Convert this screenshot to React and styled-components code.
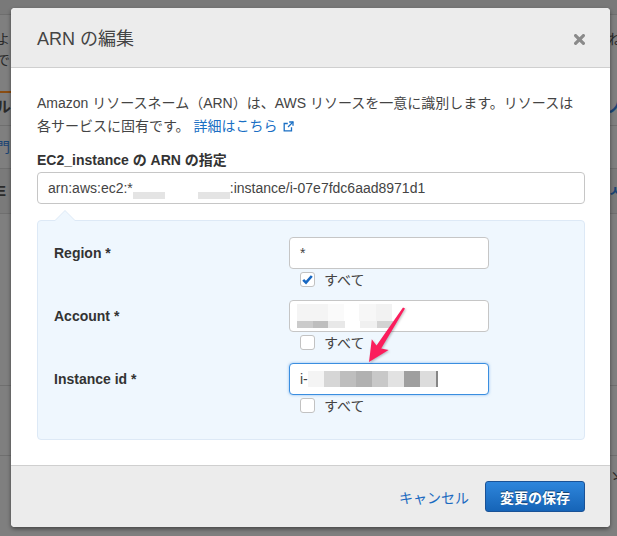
import React from "react";
import styled, { createGlobalStyle } from "styled-components";

const FONT = `"Liberation Sans", Arial, "Noto Sans CJK JP", sans-serif`;

const Global = createGlobalStyle`
  html, body { margin: 0; padding: 0; background: #7f7f7f; }
  body { font-family: ${FONT}; }
  * { box-sizing: border-box; }
`;

const Screen = styled.div`
  position: relative;
  width: 617px;
  height: 536px;
  overflow: hidden;
  background: #7f7f7f;
  font-family: ${FONT};
`;

/* ---------- dimmed background page ---------- */
const BgPage = styled.div`
  display: flex;
  flex-direction: column;
  width: 100%;
  height: 100%;
  color: #2a2a2a;
  font-size: 14px;
`;
const BgTop = styled.div`
  flex: none;
  height: 15px;
  background: #797979;
  border-bottom: 1px solid #6e6e6e;
`;
const BgRow = styled.div`
  flex: none;
  display: flex;
  justify-content: space-between;
  align-items: center;
  height: ${(p) => p.$h}px;
  margin: 0 -5px 0 -4px;
  line-height: 20px;
  font-weight: ${(p) => (p.$bold ? 700 : 400)};
  font-size: ${(p) => (p.$bold ? 15 : 14)}px;
  background: ${(p) => p.$bg || "transparent"};
  border-bottom: ${(p) => (p.$line ? "1px solid #6f6f6f" : "none")};
`;
const BgText = styled.span`
  color: ${(p) => p.$c || "#2a2a2a"};
`;
const BgAccent = styled.div`
  flex: none;
  height: 2px;
  width: 40px;
  background: #8a4d12;
`;

/* ---------- modal ---------- */
const Overlay = styled.div`
  position: absolute;
  inset: 0;
  display: flex;
  padding: 8px 7px 9px 11px;
`;
const Modal = styled.div`
  flex: 1;
  display: flex;
  flex-direction: column;
  background: #fff;
  border-radius: 4px;
  overflow: hidden;
  box-shadow: 0 2px 4px rgba(0, 0, 0, 0.45);
`;
const Header = styled.header`
  flex: none;
  height: 60px;
  display: flex;
  align-items: center;
  justify-content: space-between;
  padding: 3px 25px 0 26px;
  background: #ececec;
  border-bottom: 1px solid #cfcfcf;
`;
const Title = styled.h2`
  margin: 0;
  font-size: 18px;
  font-weight: 400;
  color: #444;
  line-height: 24px;
`;
const CloseBtn = styled.button`
  border: 0;
  padding: 0;
  background: none;
  width: 11px;
  height: 11px;
  display: flex;
  cursor: pointer;
`;
const Body = styled.div`
  flex: 1;
  padding: 24px 25px 0 26px;
  color: #444;
`;
const Desc = styled.p`
  margin: 0;
  font-size: 14px;
  line-height: 23px;
  color: #444;
`;
const Link = styled.a`
  color: #1a6fc4;
  text-decoration: none;
  display: inline-flex;
  align-items: center;
  gap: 5px;
`;
const FieldLabel = styled.div`
  margin-top: 12px;
  font-size: 14px;
  line-height: 21px;
  font-weight: 700;
  color: #333;
`;
const Field = styled.div`
  margin-top: ${(p) => p.$mt || 0}px;
  height: 32px;
  display: flex;
  align-items: center;
  padding: 0 ${(p) => p.$pl || 10}px;
  border: 1px solid ${(p) => (p.$focus ? "#3a8ee0" : "#c6c6c6")};
  border-radius: 4px;
  background: #fff;
  font-size: 14px;
  color: #444;
  white-space: nowrap;
  box-shadow: ${(p) => (p.$focus ? "0 0 3px rgba(58,142,224,0.55)" : "none")};
`;
const Redacted = styled.span`
  display: inline-flex;
  align-self: stretch;
  align-items: flex-end;
  padding-bottom: 4px;
`;
const Bar = styled.span`
  display: inline-block;
  width: ${(p) => p.$w}px;
  height: ${(p) => p.$h}px;
  background: ${(p) => p.$c};
`;
const Mosaic = styled.span`
  display: inline-flex;
  flex-direction: column;
`;
const MosaicRow = styled.span`
  display: flex;
`;

const Panel = styled.div`
  position: relative;
  margin-top: 16px;
  height: 220px;
  padding: 16px 16px 24px;
  background: #eff7fe;
  border: 1px solid #dde9f6;
  border-radius: 4px;
  display: flex;
  flex-direction: column;
  gap: 11px;

  &::before,
  &::after {
    content: "";
    position: absolute;
    left: 16px;
    border-style: solid;
    border-color: transparent;
  }
  &::before {
    top: -11px;
    border-width: 0 11px 11px;
    border-bottom-color: #dde9f6;
  }
  &::after {
    top: -10px;
    left: 17px;
    border-width: 0 10px 10px;
    border-bottom-color: #eff7fe;
  }
`;
const Row = styled.div`
  display: grid;
  grid-template-columns: 235px 200px;
  align-items: start;
`;
const RowLabel = styled.div`
  font-size: 14px;
  line-height: 32px;
  font-weight: 700;
  color: #333;
`;
const Stack = styled.div`
  display: flex;
  flex-direction: column;
`;
const CheckLine = styled.label`
  height: 20px;
  display: flex;
  align-items: center;
  gap: 9px;
  padding-left: 11px;
  font-size: 14px;
  color: #444;
`;
const Box = styled.span`
  width: 15px;
  height: 15px;
  border: 1px solid #c2c2c2;
  border-radius: 3px;
  background: #fff;
  display: flex;
  align-items: center;
  justify-content: center;
`;

const Footer = styled.footer`
  flex: none;
  height: 62px;
  display: flex;
  align-items: center;
  justify-content: flex-end;
  gap: 16px;
  padding: 0 25px;
  background: #ececec;
  border-top: 1px solid #cfcfcf;
`;
const CancelBtn = styled.button`
  border: 0;
  background: none;
  padding: 0;
  font-family: ${FONT};
  font-size: 14px;
  color: #1b6ac0;
  cursor: pointer;
`;
const SaveBtn = styled.button`
  width: 100px;
  height: 31px;
  border: 1px solid #1a5296;
  border-radius: 3px;
  background: linear-gradient(#2e86dc, #1664b7);
  color: #fff;
  font-family: ${FONT};
  font-size: 14px;
  font-weight: 700;
  text-shadow: 0 -1px 0 rgba(0, 0, 0, 0.45);
  cursor: pointer;
`;

const Annotation = styled.svg`
  position: absolute;
  left: 360px;
  top: 300px;
  filter: drop-shadow(1px 1px 1px rgba(0, 0, 0, 0.25));
`;

const CloseIcon = () => (
  <svg width="11" height="11" viewBox="0 0 11 11">
    <path d="M1.6 1.6 L9.4 9.4 M9.4 1.6 L1.6 9.4" stroke="#8a8a8a" strokeWidth="3.2" strokeLinecap="round" />
  </svg>
);

const ExtIcon = () => (
  <svg width="11" height="11" viewBox="0 0 11 11" fill="none" stroke="#1a6fc4" strokeWidth="1.3">
    <path d="M8.5 6.2 V9.8 H1.2 V2.5 H4.8" />
    <path d="M6.2 1 H10 V4.8" />
    <path d="M10 1 L5 6" />
  </svg>
);

const Check = () => (
  <svg width="13" height="13" viewBox="0 0 13 13">
    <path d="M2.2 6.8 L5 9.6 L10.8 3" fill="none" stroke="#1868c2" strokeWidth="2.6" />
  </svg>
);

const CheckAll = ({ checked }) => (
  <CheckLine>
    <Box>{checked && <Check />}</Box>
    すべて
  </CheckLine>
);

const accountTop = [
  [31, "#f4f4f4"],
  [16, "#fafafa"],
  [15, "#ffffff"],
  [17, "#f7f7f7"],
  [16, "#f2f2f2"],
];
const accountBottom = [
  [16, "#cbcbcb"],
  [15, "#bebebe"],
  [17, "#e8e8e8"],
  [15, "#ffffff"],
  [17, "#f0f0f0"],
  [16, "#d3d3d3"],
];
const instanceBlocks = [
  [16, "#f4f4f4"],
  [16, "#d6d6d6"],
  [16, "#bebebe"],
  [16, "#b1b1b1"],
  [16, "#c8c8c8"],
  [16, "#e2e2e2"],
  [16, "#9f9f9f"],
  [16, "#dcdcdc"],
  [2, "#868686"],
];

export default function App() {
  return (
    <Screen>
      <Global />
      <BgPage>
        <BgTop />
        <BgRow $h={14} />
        <BgRow $h={20}>
          <BgText>よ</BgText>
          <BgText>ね</BgText>
        </BgRow>
        <BgRow $h={22}>
          <BgText>で</BgText>
        </BgRow>
        <BgRow $h={20} />
        <BgAccent />
        <BgRow $h={27} $bold>
          <BgText>ル</BgText>
          <BgText $c="#1c4575">ノ</BgText>
        </BgRow>
        <BgRow $h={6} $line />
        <BgRow $h={43} $line>
          <BgText $c="#1c4575">門</BgText>
        </BgRow>
        <BgRow $h={45} $line $bold $bg="#7a7a7a">
          <BgText>E</BgText>
          <BgText $c="#1c4575">ㅅ</BgText>
        </BgRow>
        <BgRow $h={172} $line />
        <BgRow $h={70} $line />
        <BgRow $h={40}>
          <span />
          <BgText>ゝ</BgText>
        </BgRow>
      </BgPage>

      <Overlay>
        <Modal>
          <Header>
            <Title>ARN の編集</Title>
            <CloseBtn aria-label="close">
              <CloseIcon />
            </CloseBtn>
          </Header>
          <Body>
            <Desc>
              Amazon リソースネーム（ARN）は、AWS リソースを一意に識別します。リソースは
              <br />
              各サービスに固有です。{" "}
              <Link href="#">
                詳細はこちら
                <ExtIcon />
              </Link>
            </Desc>
            <FieldLabel>EC2_instance の ARN の指定</FieldLabel>
            <Field $mt={1}>
              arn:aws:ec2:*
              <Redacted>
                <Bar $w={32} $h={7} $c="#e4e4e4" />
                <Bar $w={33} $h={7} $c="#ffffff" />
                <Bar $w={32} $h={7} $c="#e4e4e4" />
              </Redacted>
              :instance/i-07e7fdc6aad8971d1
            </Field>

            <Panel>
              <Row>
                <RowLabel>Region *</RowLabel>
                <Stack>
                  <Field>*</Field>
                  <CheckAll checked />
                </Stack>
              </Row>
              <Row>
                <RowLabel>Account *</RowLabel>
                <Stack>
                  <Field $pl={7}>
                    <Mosaic>
                      <MosaicRow>
                        {accountTop.map(([w, c], i) => (
                          <Bar key={i} $w={w} $h={17} $c={c} />
                        ))}
                      </MosaicRow>
                      <MosaicRow>
                        {accountBottom.map(([w, c], i) => (
                          <Bar key={i} $w={w} $h={7} $c={c} />
                        ))}
                      </MosaicRow>
                    </Mosaic>
                  </Field>
                  <CheckAll />
                </Stack>
              </Row>
              <Row>
                <RowLabel>Instance id *</RowLabel>
                <Stack>
                  <Field $focus>
                    i-
                    <MosaicRow>
                      {instanceBlocks.map(([w, c], i) => (
                        <Bar key={i} $w={w} $h={16} $c={c} />
                      ))}
                    </MosaicRow>
                  </Field>
                  <CheckAll />
                </Stack>
              </Row>
            </Panel>
          </Body>
          <Footer>
            <CancelBtn>キャンセル</CancelBtn>
            <SaveBtn>変更の保存</SaveBtn>
          </Footer>
        </Modal>
      </Overlay>

      <Annotation width="50" height="70" viewBox="0 0 50 70">
        <polygon
          points="45,8.6 21.2,48.4 28.6,50.1 9,62 11.8,39.3 16.5,45.4 43,7.4"
          fill="#fb1d5c"
        />
      </Annotation>
    </Screen>
  );
}
